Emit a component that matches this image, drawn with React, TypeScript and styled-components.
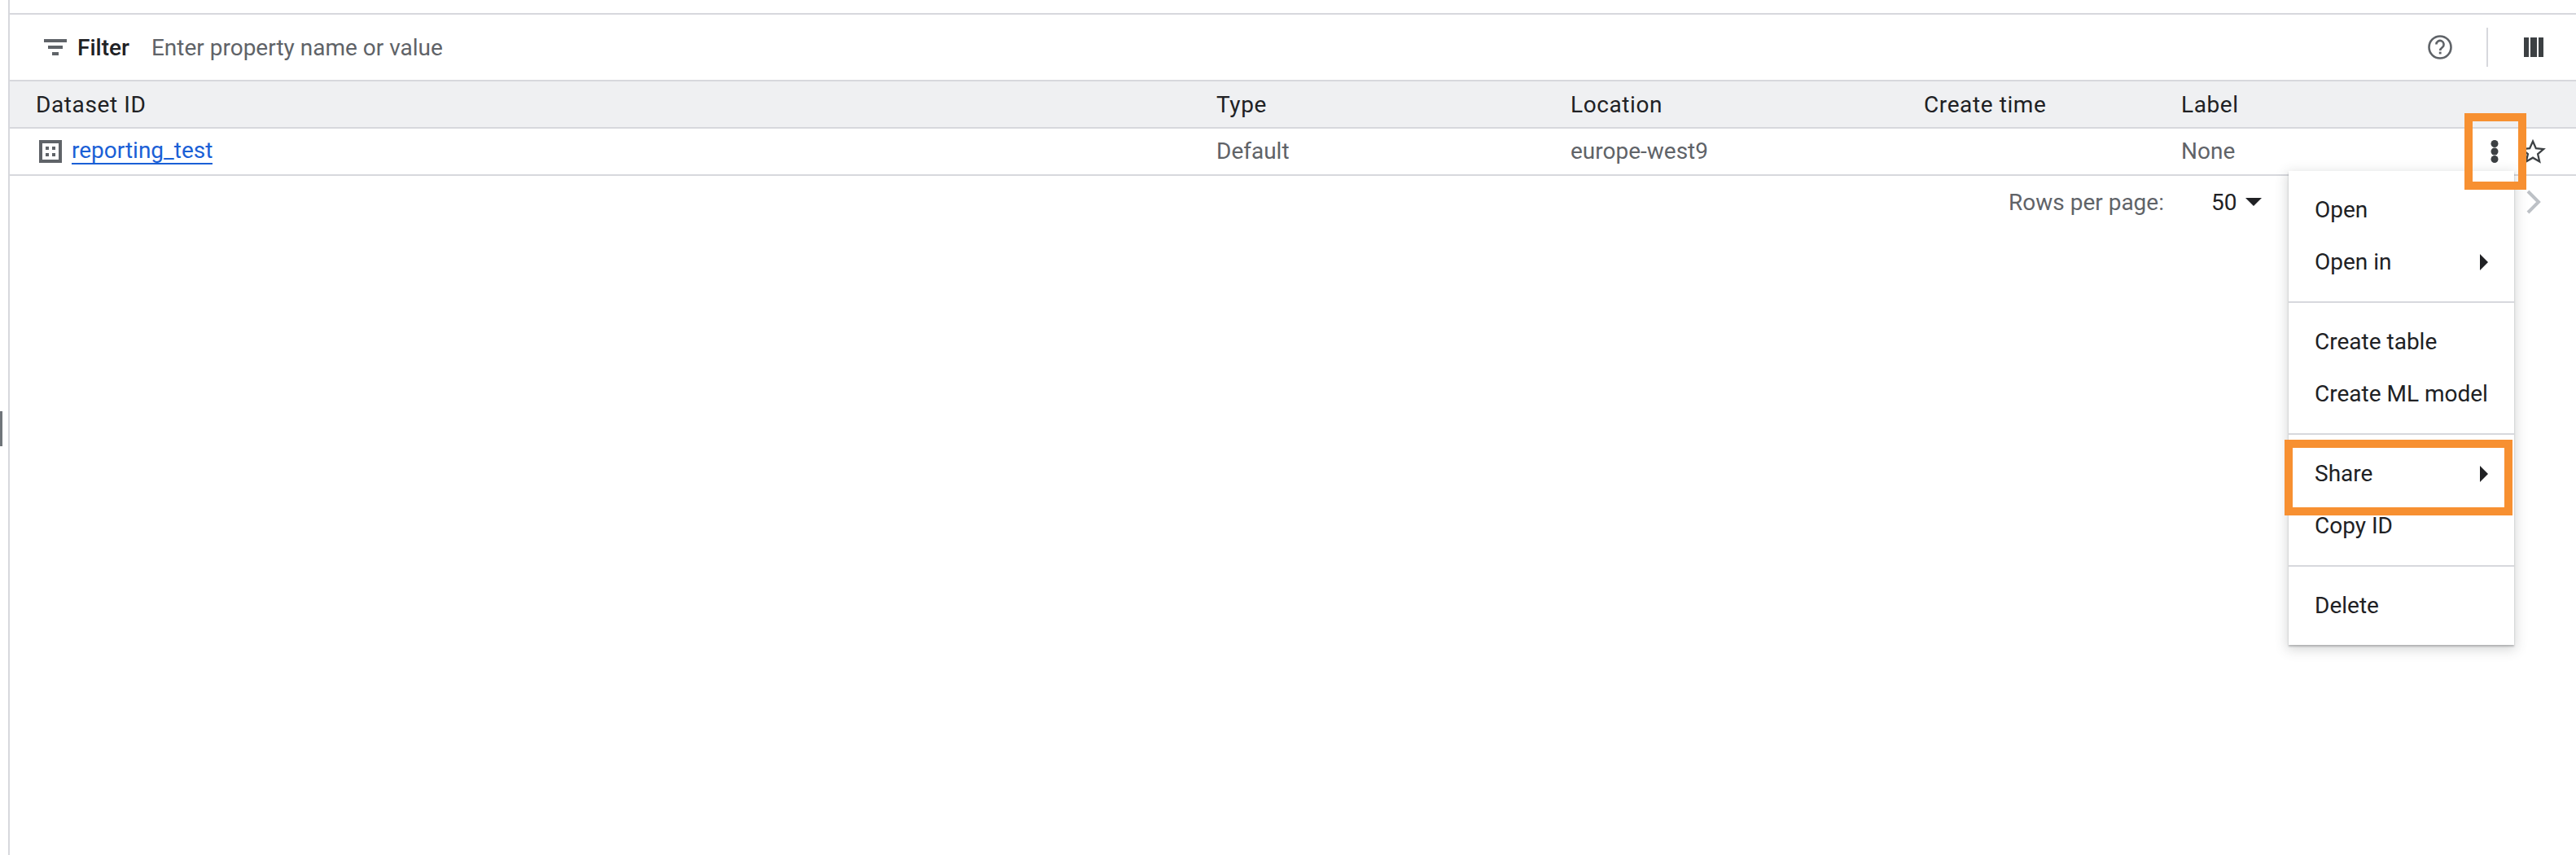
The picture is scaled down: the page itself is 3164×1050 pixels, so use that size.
import React from 'react';
import styled, { createGlobalStyle } from 'styled-components';

const GlobalStyle = createGlobalStyle`
  html, body {
    margin: 0;
    padding: 0;
    background: #fff;
  }
  body {
    font-family: Roboto, 'Liberation Sans', sans-serif;
    color: #202124;
  }
`;

const Page = styled.div`
  position: relative;
  width: 3164px;
  height: 1050px;
  overflow: hidden;
  background: #fff;
`;

const Panel = styled.div`
  margin-left: 10px;
  height: 100%;
  border-left: 2px solid #d7d8dd;
  display: flex;
  flex-direction: column;
`;

const TopSpacer = styled.div`
  height: 16px;
  border-bottom: 2px solid #d7d8dd;
`;

const FilterBar = styled.div`
  height: 80px;
  display: flex;
  align-items: center;
  padding-left: 42px;
  padding-right: 40px;
`;

const FilterLabel = styled.span`
  margin-left: 13px;
  font-size: 28px;
  font-weight: 500;
  color: #202124;
`;

const FilterHint = styled.span`
  margin-left: 27px;
  font-size: 28px;
  color: #5f6368;
`;

const BarActions = styled.div`
  margin-left: auto;
  display: flex;
  align-items: center;
`;

const BarDivider = styled.div`
  width: 2px;
  height: 48px;
  margin: 0 44px 0 42px;
  background: #d7d8dd;
`;

const TableRow = styled.div<{ $head?: boolean }>`
  height: 56px;
  display: grid;
  grid-template-columns: 1450px 435px 434px 316px 1fr;
  align-items: center;
  padding-left: 32px;
  border-top: 2px solid #d7d8dd;
  background: ${(p) => (p.$head ? '#eff0f2' : '#fff')};
  font-size: 28px;
  color: ${(p) => (p.$head ? '#202124' : '#5f6368')};
  font-weight: ${(p) => (p.$head ? 450 : 400)};
  letter-spacing: ${(p) => (p.$head ? '0.6px' : '0')};
`;

const NameCell = styled.div`
  display: flex;
  align-items: center;
  gap: 12px;
  padding-left: 4px;
`;

const DatasetLink = styled.a`
  color: #1a5fd6;
  font-size: 28px;
  line-height: 30px;
  border-bottom: 2px solid #1a5fd6;
  text-decoration: none;
`;

const BodyText = styled.span`
  margin-top: -2px;
`;

const LabelCell = styled.div`
  display: flex;
  align-items: center;
`;

const RowActions = styled.div`
  margin-left: auto;
  display: flex;
  align-items: center;
  gap: 25px;
  padding-right: 36px;
`;

const Footer = styled.div`
  height: 64px;
  border-top: 2px solid #d7d8dd;
  display: flex;
  align-items: center;
  font-size: 28px;
  padding-left: 2455px;
`;

const RowsLabel = styled.span`
  color: #5f6368;
`;

const RowsValue = styled.span`
  margin-left: 58px;
  color: #202124;
`;

const RowsCaret = styled.span`
  margin-left: 11px;
  width: 0;
  height: 0;
  border-left: 10px solid transparent;
  border-right: 10px solid transparent;
  border-top: 10px solid #202124;
`;

const NextIcon = styled.svg`
  margin-left: 324px;
  flex: none;
`;

const Handle = styled.div`
  position: absolute;
  left: 0;
  top: 505px;
  width: 3px;
  height: 43px;
  background: #70757a;
`;

const Menu = styled.div`
  position: absolute;
  left: 2811px;
  top: 210px;
  width: 277px;
  background: #fff;
  box-shadow: 0 2px 2px rgba(60, 64, 67, 0.3), 0 4px 14px 2px rgba(60, 64, 67, 0.2);
`;

const MenuGroup = styled.div`
  padding: 16px 0;
  & + & {
    border-top: 2px solid #d7d8dd;
  }
`;

const MenuItem = styled.div`
  height: 64px;
  padding: 0 32px;
  display: flex;
  align-items: center;
  justify-content: space-between;
  font-size: 28px;
  color: #202124;
`;

const ItemText = styled.span`
  margin-top: -2px;
`;

const SubArrow = styled.span`
  width: 0;
  height: 0;
  border-top: 10px solid transparent;
  border-bottom: 10px solid transparent;
  border-left: 10px solid #202124;
`;

const Callout = styled.div<{ $x: number; $y: number; $w: number; $h: number }>`
  position: absolute;
  left: ${(p) => p.$x}px;
  top: ${(p) => p.$y}px;
  width: ${(p) => p.$w}px;
  height: ${(p) => p.$h}px;
  box-sizing: border-box;
  border: 10px solid #f79031;
  pointer-events: none;
`;

const columns = ['Type', 'Location', 'Create time'];

const menuGroups = [
  [{ label: 'Open' }, { label: 'Open in', sub: true }],
  [{ label: 'Create table' }, { label: 'Create ML model' }],
  [{ label: 'Share', sub: true }, { label: 'Copy ID' }],
  [{ label: 'Delete' }],
];

export default function App() {
  return (
    <Page>
      <GlobalStyle />
      <Panel>
        <TopSpacer />
        <FilterBar>
          <svg width="28" height="20" viewBox="0 0 28 20">
            <path d="M0 0h28v4H0zM5 8h18v4H5zM10 16h8v4h-8z" fill="#5f6368" />
          </svg>
          <FilterLabel>Filter</FilterLabel>
          <FilterHint>Enter property name or value</FilterHint>
          <BarActions>
            <svg width="30" height="30" viewBox="0 0 30 30">
              <circle cx="15" cy="15" r="13.5" fill="none" stroke="#5f6368" strokeWidth="2.6" />
              <path
                d="M10.4 11.6a4.6 4.6 0 1 1 7.4 3.6c-1.6 1.2-2.6 1.9-2.6 3.8"
                fill="none"
                stroke="#5f6368"
                strokeWidth="2.6"
              />
              <rect x="13.8" y="20.6" width="2.8" height="2.8" fill="#5f6368" />
            </svg>
            <BarDivider />
            <svg width="24" height="24" viewBox="0 0 24 24">
              <path d="M0 0h6v24H0zM8 0h8v24H8zM18 0h6v24h-6z" fill="#3c4043" />
            </svg>
          </BarActions>
        </FilterBar>
        <TableRow $head>
          <span>Dataset ID</span>
          {columns.map((c) => (
            <span key={c}>{c}</span>
          ))}
          <span>Label</span>
        </TableRow>
        <TableRow>
          <NameCell>
            <svg width="28" height="28" viewBox="0 0 28 28">
              <path
                d="M0 0h28v28H0zM4 4v20h20V4zM8 8h4v4H8zM16 8h4v4h-4zM8 16h4v4H8zM16 16h4v4h-4z"
                fill="#5f6368"
                fillRule="evenodd"
              />
            </svg>
            <DatasetLink>reporting_test</DatasetLink>
          </NameCell>
          <BodyText>Default</BodyText>
          <BodyText>europe-west9</BodyText>
          <span />
          <LabelCell>
            <BodyText>None</BodyText>
            <RowActions>
              <svg width="10" height="28" viewBox="0 0 10 28">
                <circle cx="5" cy="4.5" r="4.5" fill="#3c4043" />
                <circle cx="5" cy="14" r="4.5" fill="#3c4043" />
                <circle cx="5" cy="23.5" r="4.5" fill="#3c4043" />
              </svg>
              <svg width="34" height="34" viewBox="0 0 24 24">
                <path
                  d="M12 3.2l2.7 6.1 6.6.6-5 4.4 1.5 6.5-5.8-3.4-5.8 3.4 1.5-6.5-5-4.4 6.6-.6z"
                  fill="none"
                  stroke="#3c4043"
                  strokeWidth="1.6"
                />
              </svg>
            </RowActions>
          </LabelCell>
        </TableRow>
        <Footer>
          <RowsLabel>Rows per page:</RowsLabel>
          <RowsValue>50</RowsValue>
          <RowsCaret />
          <NextIcon width="20" height="32" viewBox="0 0 20 32">
            <path d="M3 3l13 13L3 29" fill="none" stroke="#bdc1c6" strokeWidth="4" />
          </NextIcon>
        </Footer>
      </Panel>
      <Handle />
      <Menu>
        {menuGroups.map((group) => (
          <MenuGroup key={group[0].label}>
            {group.map((item) => (
              <MenuItem key={item.label}>
                <ItemText>{item.label}</ItemText>
                {item.sub && <SubArrow />}
              </MenuItem>
            ))}
          </MenuGroup>
        ))}
      </Menu>
      <Callout $x={3027} $y={139} $w={76} $h={94} />
      <Callout $x={2806} $y={540} $w={280} $h={93} />
    </Page>
  );
}
